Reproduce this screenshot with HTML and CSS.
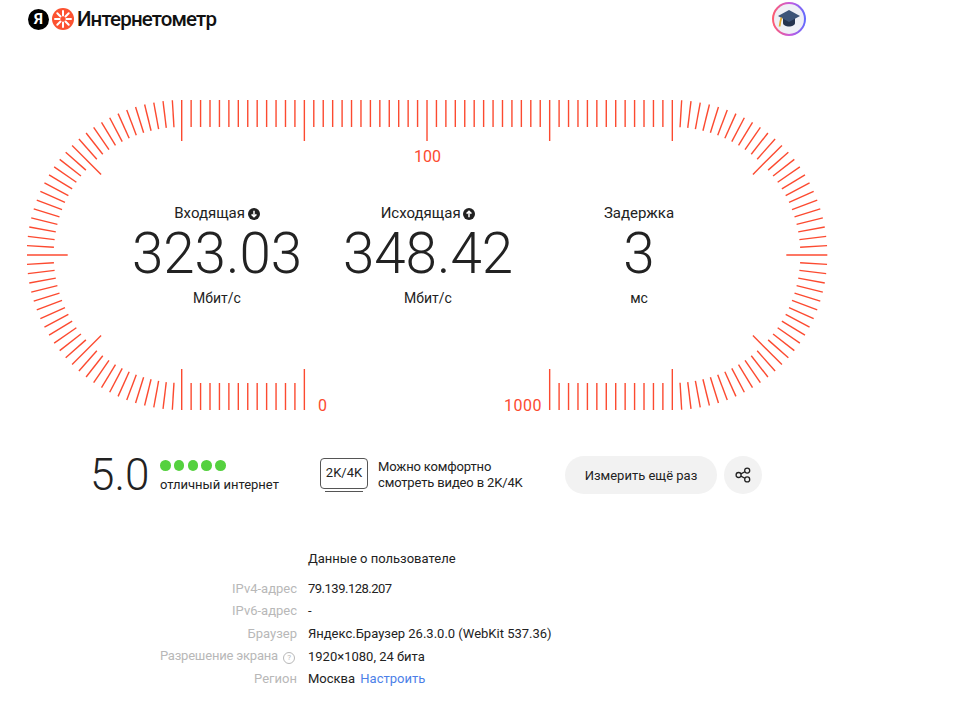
FILE: index.html
```html
<!DOCTYPE html>
<html lang="ru">
<head>
<meta charset="UTF-8">
<meta name="viewport" content="width=device-width, initial-scale=1.0">
<title>Интернетометр</title>
<link rel="stylesheet" href="styles.css">
</head>
<body>
<div class="page">
  <header class="header">
    <a class="logo" href="#">
      <span class="logo-ya">Я</span>
      <svg class="logo-mark" viewBox="0 0 22 22" width="22" height="22">
        <circle cx="11" cy="11" r="11" fill="#fc5230"/>
        <g stroke="#fff" stroke-width="2" stroke-linecap="round">
          <path d="M11 3v4.6M11 14.4V19M3 11h4.6M14.4 11H19"/>
          <path d="M5.3 5.3l3.2 3.2M13.5 13.5l3.2 3.2M16.7 5.3l-3.2 3.2M8.5 13.5l-3.2 3.2"/>
        </g>
      </svg>
      <span class="logo-text">Интернетометр</span>
    </a>
    <div class="avatar">
      <div class="avatar-inner">
        <svg viewBox="0 0 24 20" width="24" height="20">
          <path d="M6 9v5c0 2 3 3.5 6 3.5s6-1.5 6-3.5V9z" fill="#25344f"/>
          <path d="M12 1L1 7l11 6 11-6z" fill="#3d5478"/>
          <path d="M4.5 8.5C3.6 11 3 14 2.6 17.5" fill="none" stroke="#e0a92e" stroke-width="1.8"/>
        </svg>
      </div>
    </div>
  </header>

  <section class="gauge">
    <svg class="gauge-ticks" id="gaugeTicks" viewBox="0 0 802 311" width="802" height="311"></svg>
    <span class="mark mark-100">100</span>
    <span class="mark mark-0">0</span>
    <span class="mark mark-1000">1000</span>

    <div class="readings">
      <div class="reading">
        <div class="reading-label">Входящая
          <svg class="arrow" viewBox="0 0 12 12" width="12" height="12">
            <circle cx="6" cy="6" r="6" fill="#222"/>
            <path d="M6 2.8v6M3.6 6.4L6 8.8l2.4-2.4" fill="none" stroke="#fff" stroke-width="1.5"/>
          </svg>
        </div>
        <div class="reading-value">323.03</div>
        <div class="reading-unit">Мбит/с</div>
      </div>
      <div class="reading">
        <div class="reading-label">Исходящая
          <svg class="arrow" viewBox="0 0 12 12" width="12" height="12">
            <circle cx="6" cy="6" r="6" fill="#222"/>
            <path d="M6 9.2v-6M3.6 5.6L6 3.2l2.4 2.4" fill="none" stroke="#fff" stroke-width="1.5"/>
          </svg>
        </div>
        <div class="reading-value">348.42</div>
        <div class="reading-unit">Мбит/с</div>
      </div>
      <div class="reading">
        <div class="reading-label">Задержка</div>
        <div class="reading-value">3</div>
        <div class="reading-unit">мс</div>
      </div>
    </div>
  </section>

  <section class="summary">
    <div class="rating">
      <div class="rating-value">5.0</div>
      <div class="rating-info">
        <div class="dots"><i></i><i></i><i></i><i></i><i></i></div>
        <div class="rating-text">отличный интернет</div>
      </div>
    </div>
    <div class="quality">
      <div class="screen">
        <div class="screen-box">2K/4K</div>
        <div class="screen-stand"></div>
      </div>
      <div class="quality-text">Можно комфортно<br>смотреть видео в 2K/4K</div>
    </div>
    <div class="actions">
      <button class="btn-again">Измерить ещё раз</button>
      <button class="btn-share">
        <svg viewBox="0 0 16 16" width="16" height="16" fill="none" stroke="#222" stroke-width="1.3">
          <circle cx="3.6" cy="8" r="2.5"/>
          <circle cx="12.2" cy="3.6" r="2.5"/>
          <circle cx="12.2" cy="12.4" r="2.5"/>
          <path d="M5.9 6.9l4-2.2M5.9 9.1l4 2.2"/>
        </svg>
      </button>
    </div>
  </section>

  <section class="info">
    <div class="info-title">Данные о пользователе</div>
    <div class="info-label">IPv4-адрес</div>
    <div class="info-value ip">79.139.128.207</div>
    <div class="info-label">IPv6-адрес</div>
    <div class="info-value">-</div>
    <div class="info-label">Браузер</div>
    <div class="info-value">Яндекс.Браузер 26.3.0.0 (WebKit 537.36)</div>
    <div class="info-label info-label-long">Разрешение экрана
      <span class="hint">?</span>
    </div>
    <div class="info-value">1920×1080, 24 бита</div>
    <div class="info-label">Регион</div>
    <div class="info-value">Москва <a class="link" href="#">Настроить</a></div>
  </section>
</div>
<script src="gauge.js"></script>
</body>
</html>
```
FILE: styles.css
```css
body {
  font-family: Roboto, Arial, sans-serif;
  font-size: 13px;
  color: #222;
  background-color: #fff;
  margin: 0;
}

a {
  text-decoration: none;
  color: inherit;
}

.page {
  width: 855px;
}

.header {
  display: flex;
  justify-content: space-between;
  align-items: center;
  height: 38px;
  padding: 0 49px 0 28px;
}

.logo {
  display: flex;
  align-items: center;
}

.logo-ya {
  width: 21px;
  height: 21px;
  border-radius: 50%;
  background-color: #000;
  color: #fff;
  font-size: 15px;
  font-weight: 700;
  line-height: 21px;
  text-align: center;
}

.logo-mark {
  margin-left: 3px;
}

.logo-text {
  margin-left: 3px;
  font-size: 20.5px;
  font-weight: 500;
  color: #111;
  letter-spacing: -0.85px;
}

.avatar {
  width: 34px;
  height: 34px;
  box-sizing: border-box;
  padding: 2px;
  border-radius: 50%;
  background: linear-gradient(90deg, #ff5c6c, #c65be0 55%, #5d6bff);
}

.avatar-inner {
  display: flex;
  align-items: center;
  justify-content: center;
  height: 100%;
  border-radius: 50%;
  background-color: #eff0f6;
}

.gauge {
  position: relative;
  width: 802px;
  height: 311px;
  margin: 62px 0 0 27px;
  display: flex;
  align-items: center;
  justify-content: center;
}

.gauge-ticks {
  position: absolute;
  left: 0;
  top: 0;
}

.mark {
  position: absolute;
  font-size: 16px;
  color: #fc4a30;
}

.mark-100 {
  left: 387px;
  top: 47px;
}

.mark-0 {
  left: 291px;
  top: 296px;
}

.mark-1000 {
  left: 477px;
  top: 296px;
  letter-spacing: 0.5px;
}

.readings {
  position: relative;
  display: grid;
  grid-template-columns: repeat(3, 211px);
  text-align: center;
}

.reading-label {
  height: 18px;
  font-size: 15px;
  line-height: 18px;
}

.arrow {
  margin-left: -1px;
  vertical-align: -1.5px;
}

.reading-value {
  height: 56px;
  margin-top: 4px;
  font-size: 56.5px;
  font-weight: 350;
  line-height: 56px;
}

.reading-unit {
  margin-top: 7px;
  font-size: 14px;
  line-height: 18px;
}

.summary {
  display: flex;
  align-items: center;
  height: 38px;
  margin: 45px 0 0 92px;
}

.rating {
  display: flex;
  align-items: center;
  width: 228px;
}

.rating-value {
  width: 70px;
  margin-left: -2px;
  font-size: 44px;
  font-weight: 350;
}

.rating-info {
  padding-top: 3px;
}

.dots {
  display: flex;
  gap: 3.1px;
}

.dots i {
  width: 10.7px;
  height: 10.7px;
  border-radius: 50%;
  background-color: #55d13f;
}

.rating-text {
  margin-top: 6px;
  line-height: 16px;
}

.quality {
  display: flex;
  align-items: center;
  width: 245px;
}

.screen {
  width: 48px;
  margin-right: 10px;
}

.screen-box {
  box-sizing: border-box;
  height: 31px;
  border: 1.5px solid #555;
  border-radius: 4px;
  text-align: center;
  line-height: 28px;
  font-size: 13px;
}

.screen-stand {
  height: 1.5px;
  margin: 1.5px 5px 0;
  background-color: #555;
}

.quality-text {
  line-height: 16px;
  letter-spacing: -0.15px;
}

.actions {
  display: flex;
  gap: 7px;
}

button {
  height: 38px;
  border: none;
  border-radius: 19px;
  background-color: #f2f2f2;
  color: #222;
  font-family: inherit;
  font-size: 13px;
  cursor: pointer;
}

.btn-again {
  width: 152px;
}

.btn-share {
  width: 38px;
  padding: 0;
  display: flex;
  align-items: center;
  justify-content: center;
}

.info {
  display: grid;
  grid-template-columns: 297px auto;
  grid-template-rows: 28.7px;
  column-gap: 11px;
  grid-auto-rows: 22.7px;
  align-items: center;
  margin-top: 54px;
}

.info-title {
  grid-column: 2;
  align-self: start;
  line-height: 22.7px;
}

.info-label {
  grid-column: 1;
  text-align: right;
  color: #b8b8b8;
}

.info-label-long {
  letter-spacing: -0.2px;
}

.ip {
  letter-spacing: -0.5px;
}

.hint {
  display: inline-block;
  width: 10px;
  height: 10px;
  margin: 0 2px 0 2px;
  border: 1px solid #b8b8b8;
  border-radius: 50%;
  font-size: 8px;
  line-height: 10px;
  text-align: center;
}

.link {
  margin-left: 2px;
  color: #4c7fe8;
}
```
FILE: gauge.js
```js
// Рисуем деления шкалы
const svg = document.getElementById("gaugeTicks");
const NS = "http://www.w3.org/2000/svg";

const leftX = 154.7;
const centerY = 155;
const radius = 155;
const step = 9.435;
const shortTick = 27;
const longTick = 41;

function addLine(x1, y1, x2, y2) {
  const line = document.createElementNS(NS, "line");
  line.setAttribute("x1", x1.toFixed(2));
  line.setAttribute("y1", y1.toFixed(2));
  line.setAttribute("x2", x2.toFixed(2));
  line.setAttribute("y2", y2.toFixed(2));
  svg.appendChild(line);
}

// Прямые участки сверху и снизу
for (let i = 0; i <= 52; i++) {
  const x = leftX + i * step;
  const len = i % 13 === 0 ? longTick : shortTick;
  addLine(x, centerY - radius, x, centerY - radius + len);
  if (i <= 13 || i >= 39) {
    addLine(x, centerY + radius, x, centerY + radius - len);
  }
}

// Скругления слева и справа
const rightX = leftX + 52 * step;
for (let k = 1; k < 52; k++) {
  const angle = (k * Math.PI) / 52;
  const len = k % 13 === 0 ? longTick : shortTick;
  const sin = Math.sin(angle);
  const cos = Math.cos(angle);
  addLine(leftX - radius * sin, centerY - radius * cos, leftX - (radius - len) * sin, centerY - (radius - len) * cos);
  addLine(rightX + radius * sin, centerY - radius * cos, rightX + (radius - len) * sin, centerY - (radius - len) * cos);
}

svg.setAttribute("stroke", "#fc4a30");
svg.setAttribute("stroke-width", "1.4");
```
